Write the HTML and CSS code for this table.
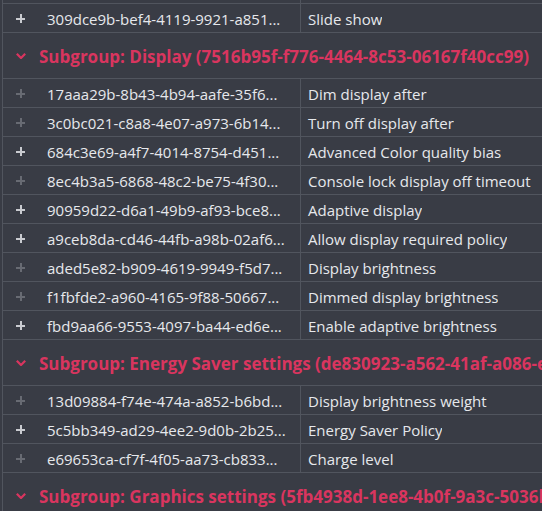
FILE: index.html
```html
<!DOCTYPE html>
<html>
<head>
<meta charset="utf-8">
<link rel="stylesheet" href="styles.css">
</head>
<body>
<div class="tree">
  <div class="row"><div class="cell id"></div><div class="cell name"></div></div>
  <div class="row"><div class="cell id"><span class="plus"></span><span class="idtext">309dce9b-bef4-4119-9921-a851...</span></div><div class="cell name">Slide show</div></div>

  <div class="group"><svg class="chev" viewBox="0 0 10 6" width="10" height="6"><path d="M0.8 0.8 L5 5 L9.2 0.8" /></svg><span>Subgroup: Display (7516b95f-f776-4464-8c53-06167f40cc99)</span></div>
  <div class="row"><div class="cell id"><span class="plus dim"></span><span class="idtext">17aaa29b-8b43-4b94-aafe-35f6...</span></div><div class="cell name">Dim display after</div></div>
  <div class="row"><div class="cell id"><span class="plus dim"></span><span class="idtext">3c0bc021-c8a8-4e07-a973-6b14...</span></div><div class="cell name">Turn off display after</div></div>
  <div class="row"><div class="cell id"><span class="plus"></span><span class="idtext">684c3e69-a4f7-4014-8754-d451...</span></div><div class="cell name">Advanced Color quality bias</div></div>
  <div class="row"><div class="cell id"><span class="plus dim"></span><span class="idtext">8ec4b3a5-6868-48c2-be75-4f30...</span></div><div class="cell name">Console lock display off timeout</div></div>
  <div class="row"><div class="cell id"><span class="plus"></span><span class="idtext">90959d22-d6a1-49b9-af93-bce8...</span></div><div class="cell name">Adaptive display</div></div>
  <div class="row"><div class="cell id"><span class="plus"></span><span class="idtext">a9ceb8da-cd46-44fb-a98b-02af6...</span></div><div class="cell name">Allow display required policy</div></div>
  <div class="row"><div class="cell id"><span class="plus dim"></span><span class="idtext">aded5e82-b909-4619-9949-f5d7...</span></div><div class="cell name">Display brightness</div></div>
  <div class="row"><div class="cell id"><span class="plus dim"></span><span class="idtext">f1fbfde2-a960-4165-9f88-50667...</span></div><div class="cell name">Dimmed display brightness</div></div>
  <div class="row"><div class="cell id"><span class="plus"></span><span class="idtext">fbd9aa66-9553-4097-ba44-ed6e...</span></div><div class="cell name">Enable adaptive brightness</div></div>

  <div class="group"><svg class="chev" viewBox="0 0 10 6" width="10" height="6"><path d="M0.8 0.8 L5 5 L9.2 0.8" /></svg><span>Subgroup: Energy Saver settings (de830923-a562-41af-a086-e5a1c2b9d7f4)</span></div>
  <div class="row"><div class="cell id"><span class="plus dim"></span><span class="idtext">13d09884-f74e-474a-a852-b6bd...</span></div><div class="cell name">Display brightness weight</div></div>
  <div class="row"><div class="cell id"><span class="plus"></span><span class="idtext">5c5bb349-ad29-4ee2-9d0b-2b25...</span></div><div class="cell name">Energy Saver Policy</div></div>
  <div class="row"><div class="cell id"><span class="plus dim"></span><span class="idtext">e69653ca-cf7f-4f05-aa73-cb833...</span></div><div class="cell name">Charge level</div></div>

  <div class="group"><svg class="chev" viewBox="0 0 10 6" width="10" height="6"><path d="M0.8 0.8 L5 5 L9.2 0.8" /></svg><span>Subgroup: Graphics settings (5fb4938d-1ee8-4b0f-9a3c-5036bf2c1d9e)</span></div>
</div>
</body>
</html>
```

FILE: styles.css
```css
html, body {
  margin: 0;
  padding: 0;
  background: #393c45;
  overflow: hidden;
}
body {
  width: 542px;
  height: 511px;
  font-family: "Open Sans", "Noto Sans", sans-serif;
  font-size: 15px;
  color: #e6e8ec;
}
.tree {
  margin-top: -25px;
  margin-left: 2px;
  border-left: 1px solid #51555e;
  width: 800px;
}
.row {
  display: flex;
  height: 28px;
  border-bottom: 1px solid #51555e;
}
.cell {
  display: flex;
  align-items: center;
  white-space: nowrap;
  overflow: hidden;
  padding-top: 1px;
}
.id {
  width: 297px;
  border-right: 1px solid #51555e;
}
.name {
  padding-left: 7px;
}
.plus {
  position: relative;
  width: 9px;
  height: 9px;
  margin-left: 13px;
  margin-right: 22px;
  flex: none;
}
.plus::before, .plus::after {
  content: "";
  position: absolute;
  background: #c9cbd0;
}
.plus::before { left: 0; right: 0; top: 4px; height: 2px; }
.plus::after { top: 0; bottom: 0; left: 4px; width: 2px; }
.plus.dim::before, .plus.dim::after { background: #686b73; }
.group {
  display: flex;
  align-items: center;
  height: 45px;
  padding-top: 1px;
  box-sizing: border-box;
  height: 46px;
  border-bottom: 1px solid #51555e;
  color: #d9355f;
  font-weight: bold;
  font-size: 17px;
  white-space: nowrap;
}
.chev {
  margin-left: 13px;
  margin-right: 13px;
  flex: none;
}
.chev path {
  fill: none;
  stroke: #d9355f;
  stroke-width: 2.2;
}
```
